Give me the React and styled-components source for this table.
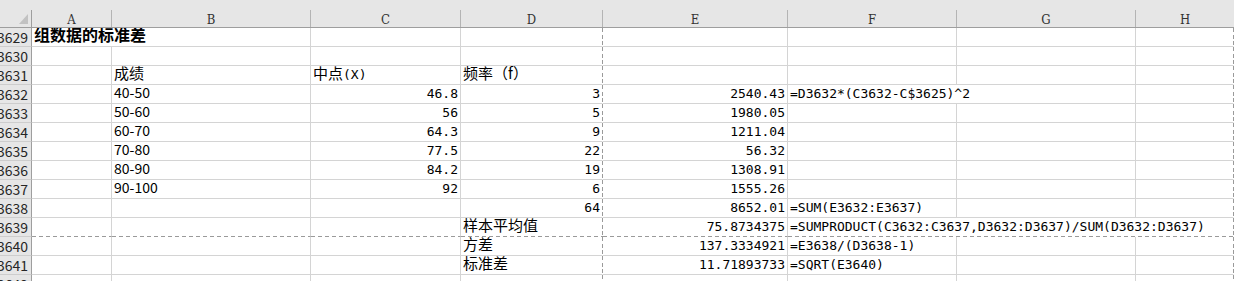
import React from 'react';
import styled, { createGlobalStyle } from 'styled-components';

const GRID = '#d4d4d4';
const HEAD_BG = '#e6e6e6';
const HEAD_EDGE = '#9e9e9e';
const HEAD_SEP = '#b4b4b4';
const DASH = '#9a9a9a';
const COLS = '32px 80px 199px 150px 142px 185px 169px 179px 98px';
const LETTERS = ['A', 'B', 'C', 'D', 'E', 'F', 'G', 'H'];
const BREAK_COLS = [3, 7];
const BREAK_ROW = 3639;

const GlobalStyle = createGlobalStyle`
  html, body { margin: 0; padding: 0; background: #fff; }
  body { overflow: hidden; }
  #root { width: 1234px; height: 281px; overflow: hidden; }
`;

const Sheet = styled.div`
  display: flex;
  flex-direction: column;
  width: 1234px;
`;

const TopStrip = styled.div`
  height: 10px;
  background: ${HEAD_BG};
`;

const HeaderRow = styled.div`
  display: grid;
  grid-template-columns: ${COLS};
  grid-template-rows: 17px;
  box-sizing: border-box;
  height: 18px;
  background: ${HEAD_BG};
  border-bottom: 1px solid ${HEAD_EDGE};
`;

const Corner = styled.div`
  display: flex;
  justify-content: flex-end;
  align-items: flex-end;
  box-sizing: border-box;
  padding: 0 3px 3px 0;
  border-right: 1px solid ${HEAD_EDGE};
`;

const ColHead = styled.div`
  box-sizing: border-box;
  height: 17px;
  overflow: hidden;
  text-align: center;
  font-family: "DejaVu Serif Condensed", "DejaVu Serif", serif;
  font-size: 13px;
  line-height: 19px;
  color: #333;
  border-right: ${(p) => (p.$last ? 'none' : `1px solid ${HEAD_SEP}`)};
`;

const Row = styled.div`
  display: grid;
  grid-template-columns: ${COLS};
  grid-template-rows: 19px;
`;

const RowHead = styled.div`
  display: flex;
  justify-content: flex-end;
  box-sizing: border-box;
  padding-right: 3px;
  overflow: hidden;
  white-space: nowrap;
  background: ${HEAD_BG};
  border-right: 1px solid ${HEAD_EDGE};
  border-bottom: 1px solid #cdcdcd;
  font-family: "Noto Sans CJK SC", sans-serif;
  font-size: 14px;
  line-height: 18px;
  color: #262626;
`;

const dashV = `linear-gradient(to bottom, ${DASH} 0 4px, transparent 4px 7px, ${DASH} 7px 11px, transparent 11px 13px, ${DASH} 13px 17px, transparent 17px)`;
const dashH = `repeating-linear-gradient(to right, ${DASH} 0 4px, transparent 4px 7px)`;

const breakLayers = (p) => {
  const img = [];
  const size = [];
  const pos = [];
  if (p.$breakRight) {
    img.push(dashV);
    size.push('1px 100%');
    pos.push('right top');
  }
  if (p.$breakBottom) {
    img.push(dashH);
    size.push('100% 1px');
    pos.push('left bottom');
  }
  if (!img.length) return '';
  return `
    background-image: ${img.join(', ')};
    background-size: ${size.join(', ')};
    background-position: ${pos.join(', ')};
  `;
};

const Cell = styled.div`
  grid-column: span ${(p) => p.$span || 1};
  box-sizing: border-box;
  min-width: 0;
  padding: 0 2px;
  overflow: hidden;
  white-space: nowrap;
  text-align: ${(p) => p.$align || 'left'};
  font-family: "DejaVu Sans Mono", monospace;
  font-size: 13px;
  line-height: 18px;
  color: #000;
  background-color: #fff;
  background-origin: border-box;
  background-repeat: no-repeat;
  border-right: 1px solid ${(p) => (p.$breakRight ? 'transparent' : GRID)};
  border-bottom: 1px solid ${(p) => (p.$breakBottom ? 'transparent' : GRID)};
  ${breakLayers}
`;

const Han = styled.span`
  font-family: "Noto Sans CJK SC", sans-serif;
  font-size: ${(p) => p.$size || 15}px;
  font-weight: ${(p) => (p.$bold ? 700 : 400)};
  line-height: 0;
`;

const Label = styled.span`
  font-family: "Noto Sans CJK SC", sans-serif;
  font-size: 14px;
  line-height: 0;
`;

const SelectAll = () => (
  <svg width="9" height="10" viewBox="0 0 9 10">
    <polygon points="9,0 9,10 0,10" fill="#c2c2c2" />
  </svg>
);

const num = (v) => ({ c: v, align: 'right' });
const lab = (v) => ({ c: <Label>{v}</Label> });
const fx = (v, span = 1) => ({ c: v, span });
const han = (v) => ({ c: <Han>{v}</Han> });

const rows = [
  [3629, { A: { c: <Han $size={16} $bold>组数据的标准差</Han>, span: 2 } }],
  [3630, {}],
  [3631, { B: han('成绩'), C: { c: <><Han>中点</Han>(X)</> }, D: han('频率（f）') }],
  [3632, { B: lab('40-50'), C: num('46.8'), D: num('3'), E: num('2540.43'), F: fx('=D3632*(C3632-C$3625)^2', 2) }],
  [3633, { B: lab('50-60'), C: num('56'), D: num('5'), E: num('1980.05') }],
  [3634, { B: lab('60-70'), C: num('64.3'), D: num('9'), E: num('1211.04') }],
  [3635, { B: lab('70-80'), C: num('77.5'), D: num('22'), E: num('56.32') }],
  [3636, { B: lab('80-90'), C: num('84.2'), D: num('19'), E: num('1308.91') }],
  [3637, { B: lab('90-100'), C: num('92'), D: num('6'), E: num('1555.26') }],
  [3638, { D: num('64'), E: num('8652.01'), F: fx('=SUM(E3632:E3637)') }],
  [3639, { D: han('样本平均值'), E: num('75.8734375'), F: fx('=SUMPRODUCT(C3632:C3637,D3632:D3637)/SUM(D3632:D3637)', 3) }],
  [3640, { D: han('方差'), E: num('137.3334921'), F: fx('=E3638/(D3638-1)') }],
  [3641, { D: han('标准差'), E: num('11.71893733'), F: fx('=SQRT(E3640)') }],
  [3642, {}],
];

const renderCells = (n, cells) => {
  const out = [];
  let i = 0;
  while (i < LETTERS.length) {
    const spec = cells[LETTERS[i]] || {};
    const span = spec.span || 1;
    const end = i + span - 1;
    out.push(
      <Cell
        key={LETTERS[i]}
        $span={span}
        $align={spec.align}
        $breakRight={BREAK_COLS.includes(end)}
        $breakBottom={n === BREAK_ROW}
      >
        {spec.c}
      </Cell>
    );
    i += span;
  }
  return out;
};

export default function App() {
  return (
    <>
      <GlobalStyle />
      <Sheet>
        <TopStrip />
        <HeaderRow>
          <Corner>
            <SelectAll />
          </Corner>
          {LETTERS.map((l, i) => (
            <ColHead key={l} $last={i === LETTERS.length - 1}>
              {l}
            </ColHead>
          ))}
        </HeaderRow>
        {rows.map(([n, cells]) => (
          <Row key={n}>
            <RowHead>{n}</RowHead>
            {renderCells(n, cells)}
          </Row>
        ))}
      </Sheet>
    </>
  );
}
